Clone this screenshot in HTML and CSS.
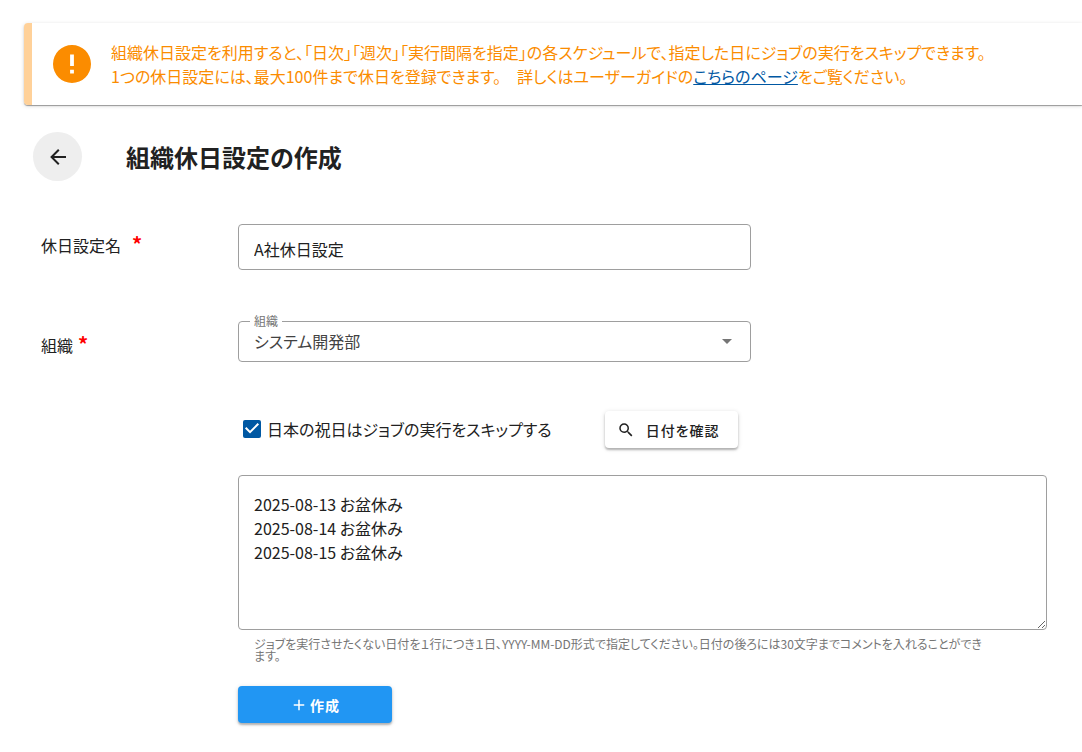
FILE: index.html
```html
<!DOCTYPE html>
<html lang="ja">
<head>
  <meta charset="UTF-8" />
  <meta name="viewport" content="width=device-width, initial-scale=1" />
  <title>組織休日設定の作成</title>
  <link rel="stylesheet" href="styles.css">
</head>
<body>
  <div class="alert">
    <svg class="alert-icon" viewBox="2 2 20 20" aria-hidden="true">
      <path d="M13 13h-2V7h2m0 10h-2v-2h2M12 2A10 10 0 0 0 2 12a10 10 0 0 0 10 10 10 10 0 0 0 10-10A10 10 0 0 0 12 2Z" />
    </svg>
    <p>組織休日設定を利用すると、「日次」「週次」「実行間隔を指定」の各スケジュールで、指定した日にジョブの実行をスキップできます。<br />1つの休日設定には、最大100件まで休日を登録できます。　詳しくはユーザーガイドの<a href="#">こちらのページ</a>をご覧ください。</p>
  </div>

  <header class="page-header">
    <button type="button" class="back-button" aria-label="戻る">
      <svg viewBox="0 0 24 24"><path d="M20 11v2H8l5.5 5.5-1.42 1.42L4.16 12l7.92-7.92L13.5 5.5 8 11h12Z" /></svg>
    </button>
    <h1>組織休日設定の作成</h1>
  </header>

  <form class="holiday-form">
    <label class="row-label wide" for="name">休日設定名<span class="required">*</span></label>
    <input type="text" id="name" class="field" value="A社休日設定" />

    <label class="row-label" for="org">組織<span class="required">*</span></label>
    <div class="select-box">
      <label class="floating-label" for="org">組織</label>
      <select id="org" class="field">
        <option>システム開発部</option>
      </select>
    </div>

    <div class="options">
      <label class="check-label"><input type="checkbox" id="skip" checked />日本の祝日はジョブの実行をスキップする</label>
      <button type="button" class="check-button">
        <svg viewBox="0 0 24 24"><path d="M9.5 3A6.5 6.5 0 0 1 16 9.5c0 1.61-.59 3.09-1.56 4.23l.27.27h.79l5 5-1.5 1.5-5-5v-.79l-.27-.27A6.52 6.52 0 0 1 9.5 16 6.5 6.5 0 0 1 3 9.5 6.5 6.5 0 0 1 9.5 3m0 2C7 5 5 7 5 9.5S7 14 9.5 14 14 12 14 9.5 12 5 9.5 5Z" /></svg>
        日付を確認
      </button>
    </div>

    <div class="dates">
      <textarea id="dates" aria-label="休日" aria-describedby="dates-hint">2025-08-13 お盆休み
2025-08-14 お盆休み
2025-08-15 お盆休み</textarea>
      <p id="dates-hint" class="hint">ジョブを実行させたくない日付を１行につき１日、YYYY-MM-DD形式で指定してください。日付の後ろには30文字までコメントを入れることができます。</p>
    </div>

    <button type="submit" class="submit-button">
      <svg viewBox="0 0 24 24"><path d="M19 13h-6v6h-2v-6H5v-2h6V5h2v6h6v2Z" /></svg>
      作成
    </button>
  </form>
</body>
</html>
```
FILE: styles.css
```css
* {
  box-sizing: border-box;
}
body {
  margin: 0;
  padding: 23px 0 24px 24px;
  overflow-x: hidden;
  background: #fff;
  color: #212121;
  font-family: "Noto Sans CJK JP", sans-serif;
  font-size: 16px;
  line-height: 24px;
  font-feature-settings: "palt";
}
input, select, textarea, button {
  font: inherit;
  color: inherit;
  font-feature-settings: inherit;
}
svg {
  fill: currentColor;
}
.alert {
  display: flex;
  align-items: center;
  gap: 20px;
  min-height: 82px;
  padding: 16px 16px 16px 21px;
  border-left: 8px solid #ffd199;
  border-radius: 4px 0 0 4px;
  box-shadow: 0 1px 1px rgba(0,0,0,0.35), 0 1px 4px rgba(0,0,0,0.14);
  color: #fb8c00;
}
.alert p {
  margin: 0;
}
.alert a {
  color: #0058a3;
}
.alert-icon {
  flex: none;
  width: 38px;
  height: 38px;
}
.page-header {
  display: flex;
  align-items: center;
  gap: 44px;
  margin: 27px 0 43px 9px;
}
.page-header h1 {
  margin: 0;
  font-size: 24px;
  line-height: 32px;
}
.back-button {
  display: flex;
  align-items: center;
  justify-content: center;
  width: 49px;
  height: 49px;
  padding: 0;
  border: none;
  border-radius: 50%;
  background: #eee;
  cursor: pointer;
}
.back-button svg {
  width: 24px;
  height: 24px;
}
.holiday-form {
  display: grid;
  grid-template-columns: 197px 1fr;
  margin: 0 35px 0 17px;
}
.row-label {
  padding-top: 12px;
}
.row-label.wide {
  padding-top: 9px;
}
.required {
  margin-left: 5px;
  color: #f00;
  font-size: 20px;
  font-weight: bold;
  line-height: 1;
}
.wide .required {
  margin-left: 11px;
}
.field {
  display: block;
  width: 100%;
  max-width: 513px;
  padding: 0 15px;
  border: 1px solid #9e9e9e;
  border-radius: 4px;
  background: #fff;
}
input.field {
  height: 46px;
  padding-top: 4px;
}
.select-box {
  position: relative;
  max-width: 513px;
}
.holiday-form > .select-box,
.holiday-form > .row-label:not(.wide) {
  margin-top: 51px;
}
select.field {
  height: 41px;
  padding-bottom: 2px;
  appearance: none;
  color: #424242;
}
.select-box::after {
  content: "";
  position: absolute;
  top: 18px;
  right: 19px;
  border: 5px solid transparent;
  border-top-color: #757575;
  border-bottom: none;
}
.floating-label {
  position: absolute;
  top: -8px;
  left: 12px;
  padding: 0 4px;
  background: #fff;
  color: #757575;
  font-size: 12px;
  line-height: 16px;
}
.options {
  grid-column: 2;
  display: flex;
  align-items: center;
  gap: 53px;
  margin-top: 49px;
  padding-left: 5px;
}
.check-label {
  display: flex;
  align-items: center;
  gap: 6px;
  padding-bottom: 2px;
}
.check-label input {
  width: 18px;
  height: 18px;
  margin: 0;
  appearance: none;
  border: 2px solid #757575;
  border-radius: 2px;
}
.check-label input:checked {
  border: none;
  background: #0058a3;
}
.check-label input:checked::before {
  content: "";
  display: block;
  height: 18px;
  background: #fff;
  clip-path: polygon(39% 78%, 11% 50%, 19% 42%, 39% 62%, 81% 20%, 89% 28%);
}
.check-button, .submit-button {
  display: flex;
  align-items: center;
  border: none;
  border-radius: 4px;
  font-size: 14px;
  letter-spacing: 1px;
  box-shadow: 0 2px 2px rgba(0,0,0,0.24), 0 1px 5px rgba(0,0,0,0.14);
  cursor: pointer;
}
.check-button {
  gap: 11px;
  height: 37px;
  padding: 0 18px 0 12px;
  background: #fff;
  font-weight: 500;
}
.check-button svg {
  width: 18px;
  height: 18px;
}
.dates {
  grid-column: 2;
  margin-top: 27px;
}
.dates textarea {
  display: block;
  width: 100%;
  height: 155px;
  padding: 16px 15px;
  border: 1px solid #9e9e9e;
  border-radius: 4px;
  resize: vertical;
}
.hint {
  margin: 8px 60px 0 16px;
  color: #757575;
  font-size: 12px;
  line-height: 12px;
}
.submit-button {
  grid-column: 2;
  justify-content: center;
  gap: 2px;
  width: 154px;
  height: 37px;
  margin-top: 24px;
  background: #2196f3;
  color: #fff;
  font-weight: bold;
}
.submit-button svg {
  width: 18px;
  height: 18px;
}
```
